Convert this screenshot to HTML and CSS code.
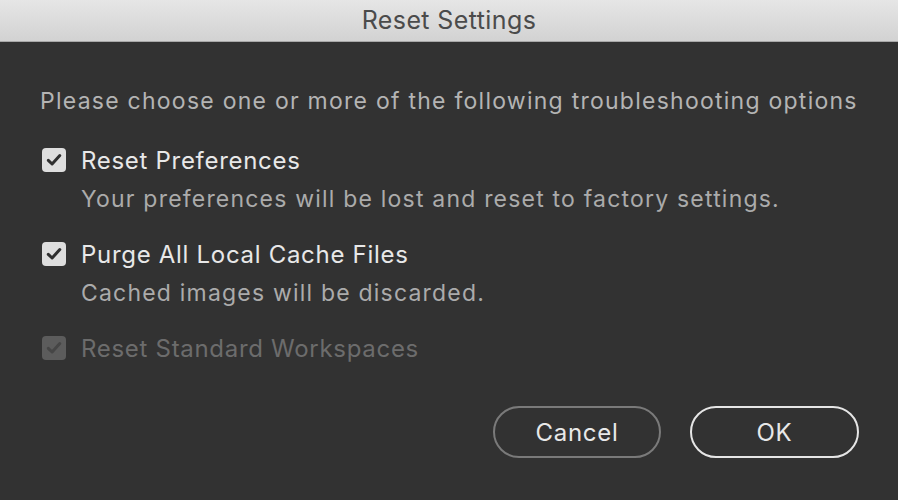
FILE: index.html
```html
<!DOCTYPE html>
<html>
<head>
<meta charset="utf-8">
<link rel="stylesheet" href="styles.css">
</head>
<body>
<div class="dialog">
  <div class="titlebar">Reset Settings</div>
  <div class="content">
    <p class="intro">Please choose one or more of the following troubleshooting options</p>
    <div class="option">
      <div class="opt-row">
        <span class="box"><svg width="24" height="24" viewBox="0 0 24 24"><path d="M6.3 12.4 L10.1 16 L17.8 7.6" fill="none" stroke="#2f2f2f" stroke-width="3" stroke-linecap="round" stroke-linejoin="round"/></svg></span>
        <span class="label">Reset Preferences</span>
      </div>
      <div class="desc">Your preferences will be lost and reset to factory settings.</div>
    </div>
    <div class="option">
      <div class="opt-row">
        <span class="box"><svg width="24" height="24" viewBox="0 0 24 24"><path d="M6.3 12.4 L10.1 16 L17.8 7.6" fill="none" stroke="#2f2f2f" stroke-width="3" stroke-linecap="round" stroke-linejoin="round"/></svg></span>
        <span class="label">Purge All Local Cache Files</span>
      </div>
      <div class="desc">Cached images will be discarded.</div>
    </div>
    <div class="option disabled">
      <div class="opt-row">
        <span class="box"><svg width="24" height="24" viewBox="0 0 24 24"><path d="M6.3 12.4 L10.1 16 L17.8 7.6" fill="none" stroke="#464646" stroke-width="3" stroke-linecap="round" stroke-linejoin="round"/></svg></span>
        <span class="label">Reset Standard Workspaces</span>
      </div>
    </div>
    <div class="buttons">
      <button class="btn cancel">Cancel</button>
      <button class="btn ok">OK</button>
    </div>
  </div>
</div>
</body>
</html>
```
FILE: styles.css
```css
html, body {
  margin: 0;
  padding: 0;
  background: #323232;
}
.dialog {
  width: 898px;
  height: 500px;
  background: #323232;
  font-family: Inter, "Liberation Sans", sans-serif;
  overflow: hidden;
}
.titlebar {
  height: 41px;
  border-bottom: 1px solid #a8a8a8;
  background: linear-gradient(#e6e6e6, #d2d2d2);
  color: #4b4b4b;
  font-size: 25px;
  letter-spacing: 0.4px;
  line-height: 41px;
  text-align: center;
}
.content {
  padding: 44px 39px 0 40px;
}
.intro {
  margin: 0;
  font-size: 23px;
  letter-spacing: 1.25px;
  line-height: 30px;
  color: #b4b4b4;
  white-space: nowrap;
}
.option {
  margin-top: 29px;
}
.option + .option {
  margin-top: 25px;
}
.opt-row {
  display: flex;
  align-items: center;
  height: 30px;
}
.box {
  width: 24px;
  height: 24px;
  border-radius: 4px;
  background: #dedede;
  margin-left: 2px;
  margin-right: 15px;
  display: flex;
  align-items: center;
  justify-content: center;
}
.box svg { display: block; }
.label {
  font-size: 24px;
  letter-spacing: 0.7px;
  color: #e8e8e8;
}
.desc {
  margin-top: 9px;
  margin-left: 41px;
  font-size: 23px;
  letter-spacing: 1.2px;
  line-height: 30px;
  color: #ababab;
  white-space: nowrap;
}
.disabled .box {
  background: #5c5c5c;
}
.disabled .label {
  color: #6c6c6c;
}
.buttons {
  display: flex;
  justify-content: flex-end;
  gap: 29px;
  margin-top: 43px;
}
.btn {
  height: 52px;
  border-radius: 26px;
  background: transparent;
  font-family: Inter, "Liberation Sans", sans-serif;
  font-size: 24px;
  letter-spacing: 0.7px;
  color: #e8e8e8;
  padding: 0;
}
.cancel {
  width: 168px;
  border: 2px solid #7a7a7a;
}
.ok {
  width: 169px;
  border: 2px solid #e6e6e6;
}
```
